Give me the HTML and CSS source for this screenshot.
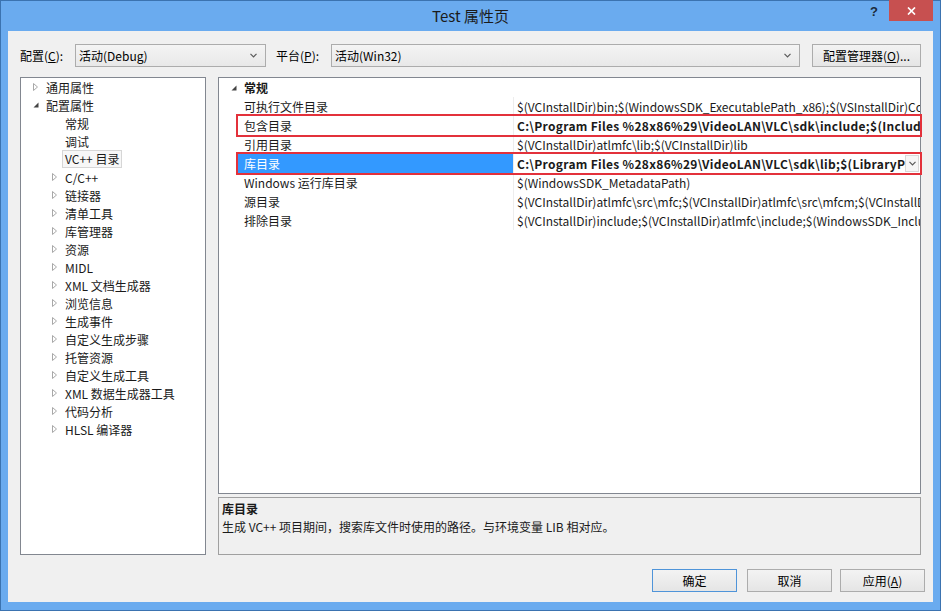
FILE: index.html
```html
<!DOCTYPE html>
<html lang="zh-CN">
<head>
<meta charset="utf-8">
<title>Test 属性页</title>
<link rel="stylesheet" href="styles.css">
</head>
<body>
<div class="window">
  <div class="titlebar">
    <div class="title">Test 属性页</div>
    <div class="caption">
      <span class="help">?</span>
      <span class="close"><svg width="9" height="8" viewBox="0 0 9 8"><path d="M1 0.5 L8 7.5 M8 0.5 L1 7.5" stroke="#fff" stroke-width="1.7" fill="none"/></svg></span>
    </div>
  </div>
  <div class="client">
    <div class="toolbar">
      <span class="lbl">配置(<u>C</u>):</span>
      <div class="combo combo-config"><span>活动(Debug)</span><svg class="chev" width="7" height="5" viewBox="0 0 7 5"><path d="M0.5 0.8 L3.5 3.8 L6.5 0.8" stroke="#5a5a5a" stroke-width="1.2" fill="none"/></svg></div>
      <span class="lbl">平台(<u>P</u>):</span>
      <div class="combo combo-platform"><span>活动(Win32)</span><svg class="chev" width="7" height="5" viewBox="0 0 7 5"><path d="M0.5 0.8 L3.5 3.8 L6.5 0.8" stroke="#5a5a5a" stroke-width="1.2" fill="none"/></svg></div>
      <button class="btn btn-manager">配置管理器(<u>O</u>)...</button>
    </div>
    <div class="main">
      <div class="tree">
        <div class="ti l0"><span class="arr"><svg width="5" height="8" viewBox="0 0 5 8"><path d="M0.5 0.5 L4.5 4 L0.5 7.5 Z" stroke="#a8a8a8" fill="none"/></svg></span>通用属性</div>
        <div class="ti l0"><span class="arr"><svg width="6" height="6" viewBox="0 0 6 6"><path d="M5.5 0.5 V5.5 H0.5 Z" fill="#444"/></svg></span>配置属性</div>
        <div class="ti l1"><span class="arr"></span>常规</div>
        <div class="ti l1"><span class="arr"></span>调试</div>
        <div class="ti l1"><span class="arr"></span><span class="sel">VC++ 目录</span></div>
        <div class="ti l1"><span class="arr"><svg width="5" height="8" viewBox="0 0 5 8"><path d="M0.5 0.5 L4.5 4 L0.5 7.5 Z" stroke="#a8a8a8" fill="none"/></svg></span>C/C++</div>
        <div class="ti l1"><span class="arr"><svg width="5" height="8" viewBox="0 0 5 8"><path d="M0.5 0.5 L4.5 4 L0.5 7.5 Z" stroke="#a8a8a8" fill="none"/></svg></span>链接器</div>
        <div class="ti l1"><span class="arr"><svg width="5" height="8" viewBox="0 0 5 8"><path d="M0.5 0.5 L4.5 4 L0.5 7.5 Z" stroke="#a8a8a8" fill="none"/></svg></span>清单工具</div>
        <div class="ti l1"><span class="arr"><svg width="5" height="8" viewBox="0 0 5 8"><path d="M0.5 0.5 L4.5 4 L0.5 7.5 Z" stroke="#a8a8a8" fill="none"/></svg></span>库管理器</div>
        <div class="ti l1"><span class="arr"><svg width="5" height="8" viewBox="0 0 5 8"><path d="M0.5 0.5 L4.5 4 L0.5 7.5 Z" stroke="#a8a8a8" fill="none"/></svg></span>资源</div>
        <div class="ti l1"><span class="arr"><svg width="5" height="8" viewBox="0 0 5 8"><path d="M0.5 0.5 L4.5 4 L0.5 7.5 Z" stroke="#a8a8a8" fill="none"/></svg></span>MIDL</div>
        <div class="ti l1"><span class="arr"><svg width="5" height="8" viewBox="0 0 5 8"><path d="M0.5 0.5 L4.5 4 L0.5 7.5 Z" stroke="#a8a8a8" fill="none"/></svg></span>XML 文档生成器</div>
        <div class="ti l1"><span class="arr"><svg width="5" height="8" viewBox="0 0 5 8"><path d="M0.5 0.5 L4.5 4 L0.5 7.5 Z" stroke="#a8a8a8" fill="none"/></svg></span>浏览信息</div>
        <div class="ti l1"><span class="arr"><svg width="5" height="8" viewBox="0 0 5 8"><path d="M0.5 0.5 L4.5 4 L0.5 7.5 Z" stroke="#a8a8a8" fill="none"/></svg></span>生成事件</div>
        <div class="ti l1"><span class="arr"><svg width="5" height="8" viewBox="0 0 5 8"><path d="M0.5 0.5 L4.5 4 L0.5 7.5 Z" stroke="#a8a8a8" fill="none"/></svg></span>自定义生成步骤</div>
        <div class="ti l1"><span class="arr"><svg width="5" height="8" viewBox="0 0 5 8"><path d="M0.5 0.5 L4.5 4 L0.5 7.5 Z" stroke="#a8a8a8" fill="none"/></svg></span>托管资源</div>
        <div class="ti l1"><span class="arr"><svg width="5" height="8" viewBox="0 0 5 8"><path d="M0.5 0.5 L4.5 4 L0.5 7.5 Z" stroke="#a8a8a8" fill="none"/></svg></span>自定义生成工具</div>
        <div class="ti l1"><span class="arr"><svg width="5" height="8" viewBox="0 0 5 8"><path d="M0.5 0.5 L4.5 4 L0.5 7.5 Z" stroke="#a8a8a8" fill="none"/></svg></span>XML 数据生成器工具</div>
        <div class="ti l1"><span class="arr"><svg width="5" height="8" viewBox="0 0 5 8"><path d="M0.5 0.5 L4.5 4 L0.5 7.5 Z" stroke="#a8a8a8" fill="none"/></svg></span>代码分析</div>
        <div class="ti l1"><span class="arr"><svg width="5" height="8" viewBox="0 0 5 8"><path d="M0.5 0.5 L4.5 4 L0.5 7.5 Z" stroke="#a8a8a8" fill="none"/></svg></span>HLSL 编译器</div>
      </div>
      <div class="right">
        <div class="grid">
          <div class="pcat"><span class="arr"><svg width="6" height="6" viewBox="0 0 6 6"><path d="M5.5 0.5 V5.5 H0.5 Z" fill="#444"/></svg></span>常规</div>
          <div class="prow"><div class="pbody"><div class="pname">可执行文件目录</div><div class="pval"><span class="vt">$(VCInstallDir)bin;$(WindowsSDK_ExecutablePath_x86);$(VSInstallDir)Common7\Tools\bin;$(VSInstallDir)Common7\tools;$(VSInstallDir)Common7\ide</span></div></div></div>
          <div class="prow"><div class="pbody hl"><div class="pname">包含目录</div><div class="pval bold"><span class="vt">C:\Program Files %28x86%29\VideoLAN\VLC\sdk\include;$(IncludePath)</span></div></div></div>
          <div class="prow"><div class="pbody"><div class="pname">引用目录</div><div class="pval"><span class="vt">$(VCInstallDir)atlmfc\lib;$(VCInstallDir)lib</span></div></div></div>
          <div class="prow"><div class="pbody hl"><div class="pname selected">库目录</div><div class="pval bold"><span class="vt">C:\Program Files %28x86%29\VideoLAN\VLC\sdk\lib;$(LibraryPath)</span><span class="dd"><svg width="7" height="5" viewBox="0 0 7 5"><path d="M0.5 0.8 L3.5 3.8 L6.5 0.8" stroke="#5a5a5a" stroke-width="1.2" fill="none"/></svg></span></div></div></div>
          <div class="prow"><div class="pbody"><div class="pname">Windows 运行库目录</div><div class="pval"><span class="vt">$(WindowsSDK_MetadataPath)</span></div></div></div>
          <div class="prow"><div class="pbody"><div class="pname">源目录</div><div class="pval"><span class="vt">$(VCInstallDir)atlmfc\src\mfc;$(VCInstallDir)atlmfc\src\mfcm;$(VCInstallDir)atlmfc\src\atl;$(VCInstallDir)crt\src</span></div></div></div>
          <div class="prow"><div class="pbody"><div class="pname">排除目录</div><div class="pval"><span class="vt">$(VCInstallDir)include;$(VCInstallDir)atlmfc\include;$(WindowsSDK_IncludePath);$(MSBuildToolsPath32)</span></div></div></div>
        </div>
        <div class="desc">
          <div class="desc-title">库目录</div>
          <div class="desc-text">生成 VC++ 项目期间，搜索库文件时使用的路径。与环境变量 LIB 相对应。</div>
        </div>
      </div>
    </div>
    <div class="footer">
      <button class="btn fbtn default">确定</button>
      <button class="btn fbtn cancel">取消</button>
      <button class="btn fbtn apply">应用(<u>A</u>)</button>
    </div>
  </div>
</div>
</body>
</html>
```
FILE: styles.css
```css
html, body {
  margin: 0;
  padding: 0;
  background: #ffffff;
}
body {
  font-family: "Noto Sans CJK SC", "Noto Sans", sans-serif;
  font-size: 12px;
  color: #000;
}
.window {
  width: 941px;
  height: 611px;
  box-sizing: border-box;
  border: 1px solid #3b73b0;
  background: #6aabef;
  padding: 0 7px 8px;
  display: flex;
  flex-direction: column;
}
.titlebar {
  height: 30px;
  flex: none;
  display: grid;
  grid-template-columns: 1fr auto 1fr;
  align-items: start;
}
.title {
  grid-column: 2;
  line-height: 29px;
  font-size: 15px;
  color: #1b1b1b;
}
.caption {
  grid-column: 3;
  justify-self: end;
  display: flex;
  align-items: flex-start;
  margin-top: -1px;
}
.help {
  width: 30px;
  height: 21px;
  line-height: 24px;
  text-align: center;
  font-weight: bold;
  font-size: 13px;
  color: #1b2a3a;
  font-family: "Liberation Sans", sans-serif;
}
.close {
  width: 44px;
  height: 21px;
  background: #c75050;
  display: flex;
  align-items: center;
  justify-content: center;
}
.client {
  flex: 1;
  background: #f0f0f0;
  display: flex;
  flex-direction: column;
}
.toolbar {
  display: flex;
  align-items: center;
  height: 23px;
  margin: 13px 12px 0;
}
.lbl {
  width: 55px;
  flex: none;
}
.combo {
  height: 23px;
  box-sizing: border-box;
  border: 1px solid #acacac;
  background: linear-gradient(#f4f4f4, #e8e8e8);
  display: flex;
  align-items: center;
  justify-content: space-between;
  padding: 0 8px 0 3px;
  flex: none;
}
.combo-config {
  width: 191px;
  margin-right: 10px;
}
.combo-platform {
  width: 469px;
  margin-right: 12px;
}
.btn {
  font-family: inherit;
  font-size: 12px;
  color: #000;
  height: 23px;
  box-sizing: border-box;
  border: 1px solid #acacac;
  background: linear-gradient(#f3f3f3, #e5e5e5);
  padding: 0;
  margin: 0;
}
.btn-manager {
  width: 109px;
}
.main {
  display: flex;
  gap: 12px;
  margin: 10px 12px 0;
  height: 478px;
}
.tree {
  width: 186px;
  flex: none;
  box-sizing: border-box;
  border: 1px solid #828790;
  background: #fff;
  padding-top: 0;
}
.ti {
  height: 18px;
  display: flex;
  align-items: center;
  white-space: nowrap;
  color: #1a1a1a;
}
.ti.l0 { padding-left: 12px; }
.ti.l1 { padding-left: 31px; }
.arr {
  width: 13px;
  flex: none;
  display: flex;
  align-items: center;
}
.sel {
  margin-left: -3px;
  padding: 0 2px;
  height: 18px;
  line-height: 16px;
  box-sizing: border-box;
  border: 1px solid #d6d6d6;
  background: #f7f7f7;
}
.right {
  flex: 1;
  display: flex;
  flex-direction: column;
  gap: 3px;
  min-width: 0;
}
.grid {
  flex: 1;
  border: 1px solid #828790;
  background: #fff;
  min-height: 0;
}
.pcat {
  height: 19px;
  display: flex;
  align-items: center;
  padding-left: 12px;
  font-weight: bold;
  color: #1a1a1a;
}
.prow {
  height: 19px;
  padding-left: 19px;
}
.pbody {
  height: 19px;
  display: grid;
  grid-template-columns: 275px 1fr;
  line-height: 19px;
  color: #1a1a1a;
}
.pbody.hl {
  outline: 2px solid #e3313b;
  outline-offset: 0;
  position: relative;
  z-index: 1;
}
.pname {
  padding-left: 6px;
  white-space: nowrap;
}
.pname.selected {
  background: #3399ff;
  color: #fff;
}
.pval {
  border-left: 1px solid #ededed;
  padding-left: 3px;
  display: flex;
  min-width: 0;
  overflow: hidden;
}
.pval.bold {
  font-weight: bold;
  letter-spacing: 0.3px;
}
.vt {
  flex: 1;
  min-width: 0;
  white-space: nowrap;
  overflow: hidden;
}
.dd {
  width: 14px;
  height: 17px;
  margin: 1px 1px 0 0;
  box-sizing: border-box;
  border: 1px solid #d8d8d8;
  background: #f6f6f6;
  display: flex;
  align-items: center;
  justify-content: center;
  flex: none;
}
.desc {
  height: 58px;
  box-sizing: border-box;
  border: 1px solid #a0a0a0;
  padding: 2px 3px;
  line-height: 18px;
  color: #1a1a1a;
}
.desc-title {
  font-weight: bold;
}
.footer {
  display: flex;
  justify-content: flex-end;
  margin: 14px 8px 0 0;
}
.fbtn {
  width: 85px;
}
.fbtn.default {
  border-color: #4f94d9;
}
.fbtn.cancel {
  margin-left: 10px;
}
.fbtn.apply {
  margin-left: 8px;
}
```
